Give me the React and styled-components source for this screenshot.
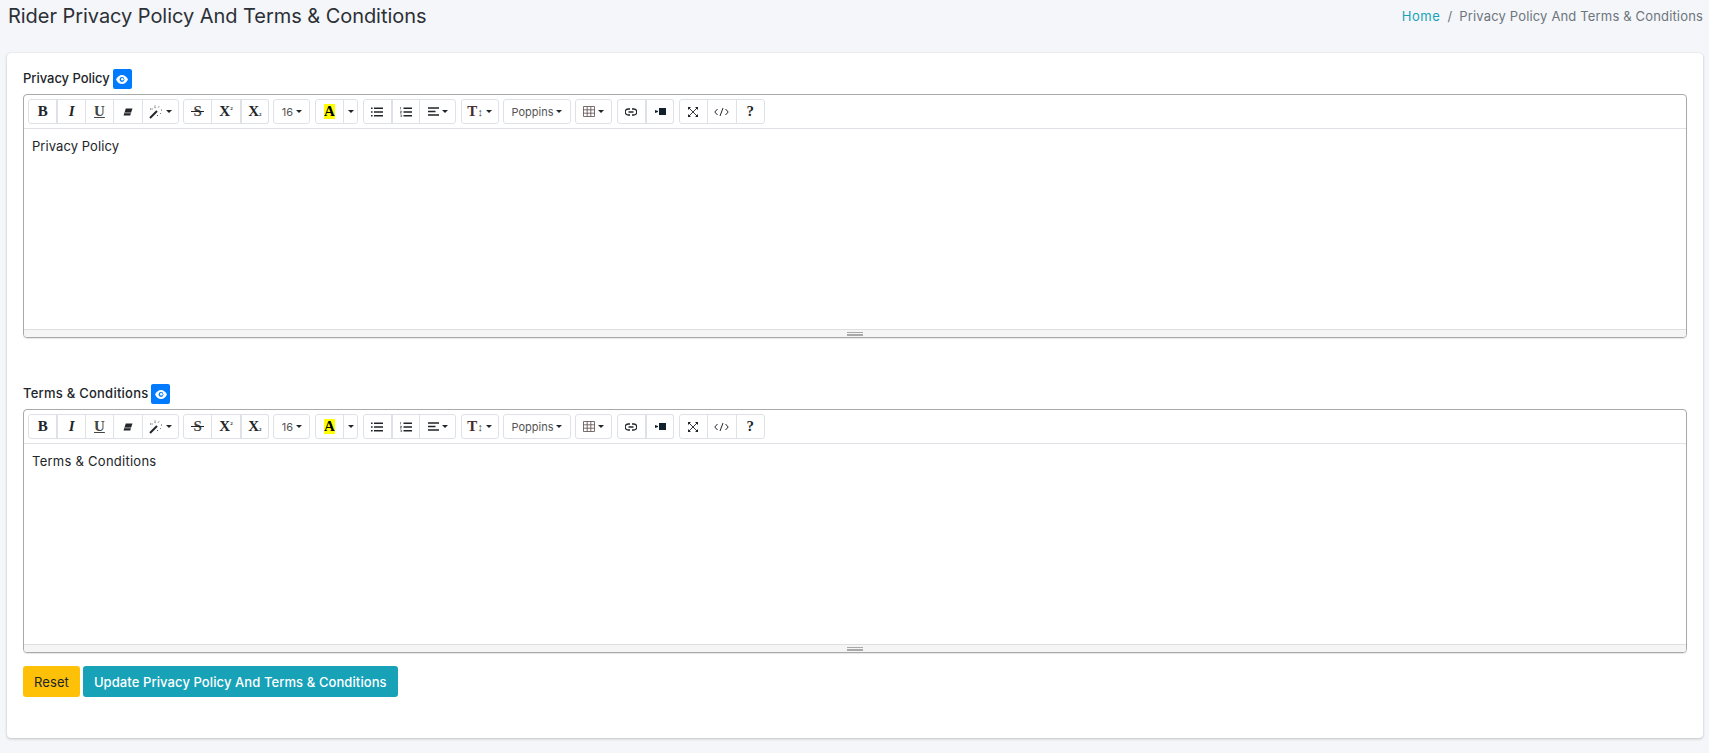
import React from "react";
import styled, { createGlobalStyle } from "styled-components";

const Global = createGlobalStyle`
  html, body { margin: 0; padding: 0; background: #f4f6f9; height: 753px; overflow: hidden; }
  body { font-family: Inter, "Open Sans", sans-serif; color: #212529; }
`;
const Page = styled.div`
  padding: 0 6px 0 7px;
`;
const Header = styled.header`
  display: flex;
  justify-content: space-between;
  align-items: center;
  height: 32px;
  margin-bottom: 21px;
`;
const Title = styled.h1`
  margin: 0 0 0 1px;
  font-size: 20px;
  font-weight: 400;
  line-height: 32px;
  letter-spacing: -0.05px;
  color: #2b3036;
`;
const Crumbs = styled.nav`
  display: flex;
  gap: 7px;
  font-size: 13px;
  letter-spacing: 0.16px;
  color: #6c757d;
`;
const CrumbLink = styled.a`
  color: #17a2b8;
  letter-spacing: 0.6px;
`;
const Card = styled.main`
  background: #fff;
  border-radius: 4px;
  box-shadow: 0 0 1px rgba(0, 0, 0, 0.125), 0 1px 3px rgba(0, 0, 0, 0.2);
  height: 685px;
  padding: 16px;
  box-sizing: border-box;
`;
const Section = styled.section`
  margin-bottom: 46px;
  &:last-of-type { margin-bottom: 13px; }
`;
const LabelRow = styled.div`
  display: flex;
  align-items: center;
  gap: 3px;
  height: 20px;
  margin-bottom: 5px;
`;
const Label = styled.label`
  font-size: 13px;
  font-weight: 500;
  letter-spacing: ${(p) => p.$track}px;
  position: relative;
  top: -1px;
  color: #212529;
`;
const EyeBtn = styled.span`
  width: 19px;
  height: 20px;
  background: #007bff;
  border-radius: 2px;
  display: flex;
  align-items: center;
  justify-content: center;
`;
const Editor = styled.div`
  height: 244px;
  box-sizing: border-box;
  border: 1px solid #a9a9a9;
  border-radius: 4px;
  display: flex;
  flex-direction: column;
  box-shadow: 0 1px 1px rgba(0, 0, 0, 0.1);
`;
const Toolbar = styled.div`
  display: flex;
  gap: 4.35px;
  height: 34px;
  box-sizing: border-box;
  padding: 4px 0 0 4px;
  border-bottom: 1px solid #dee2e6;
`;
const Group = styled.div`
  display: flex;
  height: 25px;
`;
const Tool = styled.button`
  width: ${(p) => p.$w || 29.4}px;
  height: 25px;
  box-sizing: border-box;
  padding: 0;
  margin-left: -1px;
  background: #fff;
  border: 1px solid #dee2e6;
  border-left-width: ${(p) => (p.$thick ? 2 : 1)}px;
  color: ${(p) => p.$fg || "#212529"};
  font-family: ${(p) => (p.$serif ? '"Liberation Serif", serif' : "Inter, sans-serif")};
  font-weight: ${(p) => (p.$serif ? 700 : 400)};
  font-style: ${(p) => (p.$italic ? "italic" : "normal")};
  font-size: ${(p) => p.$size || 13}px;
  display: flex;
  align-items: center;
  justify-content: center;
  gap: 3px;
  &:first-child { margin-left: 0; border-left-width: 1px; border-radius: 3px 0 0 3px; }
  &:last-child { border-radius: 0 3px 3px 0; }
  &:only-child { border-radius: 3px; }
`;
const Caret = styled.i`
  width: 0;
  height: 0;
  border-left: 3.5px solid transparent;
  border-right: 3.5px solid transparent;
  border-top: 3.5px solid #212529;
`;
const Under = styled.span`
  text-decoration: underline;
`;
const Struck = styled.span`
  position: relative;
  font-size: 15px;
  &::after {
    content: "";
    position: absolute;
    left: -2px;
    right: -2px;
    top: 8px;
    height: 1px;
    background: #212529;
  }
`;
const Marked = styled.span`
  background: #ff0;
  color: #000;
  width: 11px;
  height: 15px;
  line-height: 15px;
  display: block;
  text-align: center;
`;
const Script = styled.span`
  font-size: 5px;
  align-self: ${(p) => (p.$low ? "flex-end" : "flex-start")};
  margin: ${(p) => (p.$low ? "0 0 6px -3px" : "6px 0 0 -3px")};
`;
const Thin = styled.span`
  font-weight: 400;
  font-size: 11px;
  margin-left: -3px;
  color: #555;
`;
const Editable = styled.div`
  flex: 1;
  padding: 7px 8px;
  font-size: 13px;
  line-height: 20px;
  letter-spacing: ${(p) => p.$track}px;
  color: #212529;
`;
const StatusBar = styled.div`
  height: 8px;
  box-sizing: border-box;
  background: #f5f5f5;
  border-top: 1px solid #dedede;
  display: flex;
  flex-direction: column;
  align-items: center;
  justify-content: center;
  gap: 1px;
  border-radius: 0 0 3px 3px;
`;
const Grip = styled.i`
  width: 16px;
  height: ${(p) => p.$h}px;
  background: #a9a9a9;
`;
const Actions = styled.div`
  display: flex;
  gap: 3px;
`;
const Btn = styled.button`
  height: 31px;
  padding: 0 ${(p) => p.$pad}px;
  border: 0;
  border-radius: 3px;
  background: ${(p) => p.$bg};
  color: ${(p) => p.$fg};
  font-family: Inter, sans-serif;
  font-size: 13px;
  letter-spacing: 0.09px;
  font-weight: ${(p) => p.$weight || 400};
`;

const Svg = ({ w = 13, h = 13, vb = "0 0 14 14", children }) => (
  <svg width={w} height={h} viewBox={vb} fill="none" aria-hidden="true">{children}</svg>
);
const Eraser = () => (
  <Svg w={10} h={8} vb="0 0 11 9"><path d="M3 0.5H10.5L8 8.5H0.5Z" fill="#212529" /><path d="M1.6 5.5H9" stroke="#fff" strokeWidth="0.7" /></Svg>
);
const Wand = () => (
  <Svg w={14} h={14}><path d="M1 13L8 6" stroke="#212529" strokeWidth="2" /><path d="M6 .5v3M10 1.5 9 3M12 5h1.5M1 4h3M11 8l1 1M8.5 10v1.5" stroke="#212529" strokeWidth=".8" strokeDasharray="1 .6" /></Svg>
);
const UL = () => (
  <Svg w={12} h={10} vb="0 0 12 10"><path d="M3 1.2H12M3 5H12M3 8.8H12" stroke="#212529" strokeWidth="1.4" /><path d="M0 1.2H1.6M0 5H1.6M0 8.8H1.6" stroke="#212529" strokeWidth="1.5" /></Svg>
);
const OL = () => (
  <Svg w={12} h={10} vb="0 0 12 10"><path d="M3.5 1.2H12M3.5 5H12M3.5 8.8H12" stroke="#212529" strokeWidth="1.4" /><path d="M.5 0v2.4M0 4.2h1.6v1H0v1h1.6M0 8h1.6v2H0" stroke="#212529" strokeWidth=".5" /></Svg>
);
const Align = () => (
  <Svg w={11} h={9} vb="0 0 11 9"><path d="M0 1H11M0 4.5H7.5M0 8H11" stroke="#212529" strokeWidth="1.3" /></Svg>
);
const Table = () => (
  <Svg w={12} h={11} vb="0 0 12 11"><path d="M.5.5h11v10H.5zM.5 3.8h11M.5 7.2h11M4.2.5v10M7.8.5v10" stroke="#5a4a4a" strokeWidth=".8" /></Svg>
);
const LinkIcon = () => (
  <Svg w={12} h={8} vb="0 0 12 8"><path d="M5 1H3.2a2.9 2.9 0 0 0 0 6H5M7 1h1.8a2.9 2.9 0 0 1 0 6H7M3.5 4h5" stroke="#212529" strokeWidth="1.3" /></Svg>
);
const Video = () => (
  <Svg w={11} h={7} vb="0 0 11 7"><path d="M4 0h7v7H4zM0 2l3 1v1L0 5z" fill="#10202c" /></Svg>
);
const Fullscreen = () => (
  <Svg w={10} h={10} vb="0 0 10 10"><path d="M1 1l8 8M9 1l-8 8" stroke="#212529" strokeWidth=".9" /><path d="M0 0h3L0 3zM10 0H7l3 3zM0 10h3l-3-3zM10 10H7l3-3z" fill="#212529" /></Svg>
);
const Code = () => (
  <Svg w={15} h={8} vb="0 0 15 8"><path d="M3.5 1 .8 4l2.7 3M11.5 1l2.7 3-2.7 3M9 0 6 8" stroke="#212529" strokeWidth="1" /></Svg>
);

const EditorToolbar = () => (
  <Toolbar>
    <Group>
      <Tool $serif $size={15}>B</Tool>
      <Tool $serif $italic $thick $size={15}>I</Tool>
      <Tool $serif $size={15} $fg="#444"><Under>U</Under></Tool>
      <Tool><Eraser /></Tool>
      <Tool $w={37}><Wand /><Caret /></Tool>
    </Group>
    <Group>
      <Tool $serif $fg="#444"><Struck>S</Struck></Tool>
      <Tool $serif $size={15}>X<Script>2</Script></Tool>
      <Tool $serif $thick $size={15}>X<Script $low>2</Script></Tool>
    </Group>
    <Group>
      <Tool $w={37} $size={11} $fg="#555">16<Caret /></Tool>
    </Group>
    <Group>
      <Tool $serif $size={15}><Marked>A</Marked></Tool>
      <Tool $w={15}><Caret /></Tool>
    </Group>
    <Group>
      <Tool><UL /></Tool>
      <Tool $thick><OL /></Tool>
      <Tool $w={37}><Align /><Caret /></Tool>
    </Group>
    <Group>
      <Tool $w={38} $serif $size={15} $fg="#4a2a2a">T<Thin>↕</Thin><Caret /></Tool>
    </Group>
    <Group>
      <Tool $w={68} $size={11} $fg="#555">Poppins<Caret /></Tool>
    </Group>
    <Group>
      <Tool $w={37}><Table /><Caret /></Tool>
    </Group>
    <Group>
      <Tool><LinkIcon /></Tool>
      <Tool $thick><Video /></Tool>
    </Group>
    <Group>
      <Tool><Fullscreen /></Tool>
      <Tool><Code /></Tool>
      <Tool $serif $size={15}>?</Tool>
    </Group>
  </Toolbar>
);

const EditorSection = ({ label, text, labelTrack, textTrack }) => (
  <Section>
    <LabelRow>
      <Label $track={labelTrack}>{label}</Label>
      <EyeBtn>
        <svg width="12" height="9" viewBox="0 0 12 9" aria-hidden="true">
          <path d="M0 4.5C1.5 1.5 3.6 0 6 0s4.5 1.5 6 4.5C10.5 7.5 8.4 9 6 9S1.5 7.5 0 4.5z" fill="#fff" />
          <circle cx="6" cy="4.5" r="2.4" fill="#007bff" />
          <circle cx="6.3" cy="4.2" r="1.3" fill="#fff" />
        </svg>
      </EyeBtn>
    </LabelRow>
    <Editor>
      <EditorToolbar />
      <Editable $track={textTrack}>{text}</Editable>
      <StatusBar>
        <Grip $h={1} />
        <Grip $h={2} />
      </StatusBar>
    </Editor>
  </Section>
);

export default function App() {
  return (
    <Page>
      <Global />
      <Header>
        <Title>Rider Privacy Policy And Terms &amp; Conditions</Title>
        <Crumbs>
          <CrumbLink>Home</CrumbLink>
          <span>/</span>
          <span>Privacy Policy And Terms &amp; Conditions</span>
        </Crumbs>
      </Header>
      <Card>
        <EditorSection label="Privacy Policy" text="Privacy Policy" labelTrack={-0.04} textTrack={0.07} />
        <EditorSection label="Terms & Conditions" text="Terms & Conditions" labelTrack={0.24} textTrack={0.26} />
        <Actions>
          <Btn $bg="#ffc107" $fg="#212529" $pad={11}>Reset</Btn>
          <Btn $bg="#17a2b8" $fg="#fff" $pad={11} $weight={500}>Update Privacy Policy And Terms &amp; Conditions</Btn>
        </Actions>
      </Card>
    </Page>
  );
}
